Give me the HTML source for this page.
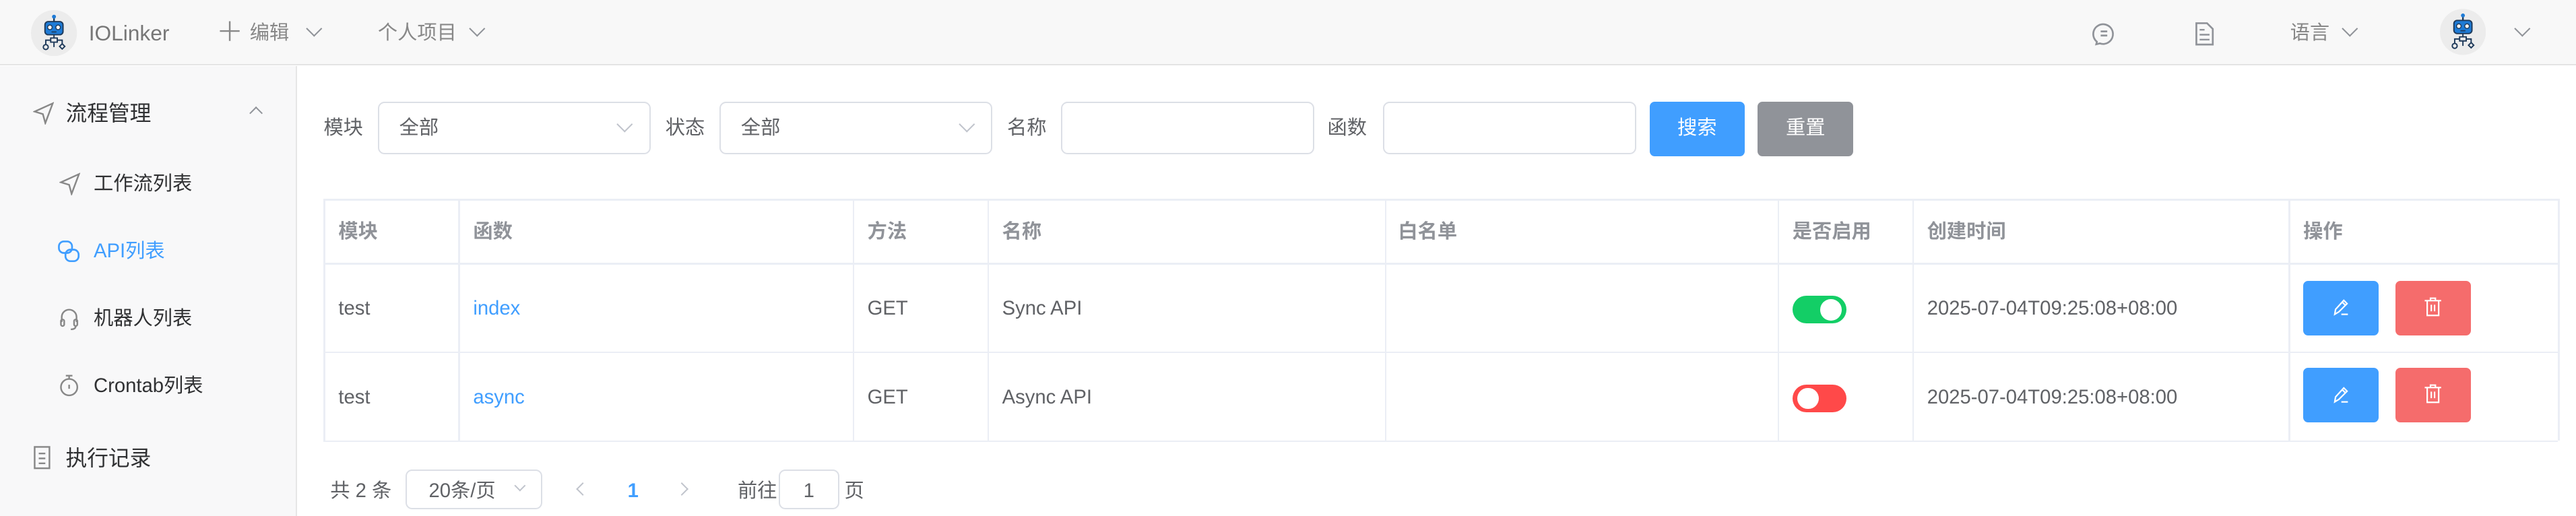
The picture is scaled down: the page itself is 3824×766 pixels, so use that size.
<!DOCTYPE html>
<html><head><meta charset="utf-8"><style>
html,body{margin:0;padding:0;}
body{width:3824px;height:766px;overflow:hidden;background:#fff;}
#r{zoom:2.43878;width:1568px;height:314px;position:relative;font-family:"Liberation Sans","Noto Sans CJK SC",sans-serif;font-size:12px;color:#606266;}
.a{position:absolute;}
.hdr{left:0;top:0;width:1568px;height:39px;background:#f8f8f8;border-bottom:1px solid #e4e4e4;}
.side{left:0;top:40px;width:180px;height:274px;background:#f8f8f9;border-right:1px solid #e6e6e6;}
.t{position:absolute;white-space:nowrap;line-height:14px;}
.sel{position:absolute;border:1px solid #dcdfe6;border-radius:4px;background:#fff;box-sizing:border-box;}
.chev{position:absolute;width:6px;height:6px;border-right:1px solid #c0c4cc;border-bottom:1px solid #c0c4cc;transform:rotate(45deg);}
.hchev{position:absolute;width:6px;height:6px;border-right:1px solid #909399;border-bottom:1px solid #909399;transform:rotate(45deg);}
.vl{position:absolute;top:121px;width:1px;height:147px;background:#ebeef5;}
.hl{position:absolute;left:197px;width:1360px;height:1px;background:#ebeef5;}
.th{color:#909399;font-weight:bold;}
.btn{position:absolute;border-radius:3px;}
</style></head><body><div id="r">
<div class="a hdr"></div>
<svg class="a" style="left:19px;top:6px" width="28" height="28" viewBox="0 0 28 28"><circle cx="14" cy="14" r="14" fill="#ececec"/><line x1="14" y1="4" x2="14" y2="7" stroke="#1f3a5a" stroke-width="1"/><circle cx="14" cy="4" r="1.2" fill="#1e7bd6"/><rect x="8.5" y="7" width="11" height="8" rx="2" fill="#1e7bd6" stroke="#1f3a5a" stroke-width=".8"/><circle cx="11.5" cy="10.5" r="1.4" fill="#fff" stroke="#1f3a5a" stroke-width=".6"/><circle cx="16.5" cy="10.5" r="1.4" fill="#fff" stroke="#1f3a5a" stroke-width=".6"/><line x1="12.5" y1="13.3" x2="15.5" y2="13.3" stroke="#1f3a5a" stroke-width=".7"/><path d="M14 15v2M12 17h4v2.5h-4zM12 18.3H9v3M16 18.3h3v2.5M14 19.5v3" fill="none" stroke="#1f3a5a" stroke-width=".8"/><circle cx="9" cy="22.5" r="1.5" fill="none" stroke="#1f3a5a" stroke-width=".8"/><path d="M19 20.5l1.6 1.6-1.6 1.6-1.6-1.6z" fill="none" stroke="#1f3a5a" stroke-width=".8"/></svg>
<div class="t" style="left:54px;top:13px;font-size:13px;color:#777">IOLinker</div>
<svg class="a" style="left:133px;top:12px" width="14" height="14" viewBox="0 0 14 14"><path d="M7 1v12M1 7h12" stroke="#888" stroke-width="1"/></svg>
<div class="t" style="left:152px;top:13px;font-size:12px;color:#888">编辑</div>
<div class="hchev" style="left:188px;top:14px"></div>
<div class="t" style="left:230px;top:13px;font-size:12px;color:#888">个人项目</div>
<div class="hchev" style="left:287px;top:14px"></div>
<svg class="a" style="left:1273px;top:13px" width="15" height="15" viewBox="0 0 15 15"><path d="M3.2 12.3A6 6 0 1 1 5 13.3L2.8 13.8z" fill="none" stroke="#909399" stroke-width="1.1"/><path d="M5.5 6h4M5.5 8.5h4" stroke="#909399" stroke-width="1.1"/></svg>
<svg class="a" style="left:1336px;top:13px" width="12" height="15" viewBox="0 0 12 15"><path d="M1 1h6.5L11 4.5V14H1z" fill="none" stroke="#909399" stroke-width="1.1"/><path d="M3 5h3M3 8h6M3 11h6" stroke="#909399" stroke-width="1"/></svg>
<div class="t" style="left:1394px;top:13px;color:#888">语言</div>
<div class="hchev" style="left:1427px;top:14px"></div>
<svg class="a" style="left:1485px;top:5px" width="28" height="29" viewBox="0 0 28 28"><circle cx="14" cy="14" r="14" fill="#ececec"/><line x1="14" y1="4" x2="14" y2="7" stroke="#1f3a5a" stroke-width="1"/><circle cx="14" cy="4" r="1.2" fill="#1e7bd6"/><rect x="8.5" y="7" width="11" height="8" rx="2" fill="#1e7bd6" stroke="#1f3a5a" stroke-width=".8"/><circle cx="11.5" cy="10.5" r="1.4" fill="#fff" stroke="#1f3a5a" stroke-width=".6"/><circle cx="16.5" cy="10.5" r="1.4" fill="#fff" stroke="#1f3a5a" stroke-width=".6"/><line x1="12.5" y1="13.3" x2="15.5" y2="13.3" stroke="#1f3a5a" stroke-width=".7"/><path d="M14 15v2M12 17h4v2.5h-4zM12 18.3H9v3M16 18.3h3v2.5M14 19.5v3" fill="none" stroke="#1f3a5a" stroke-width=".8"/><circle cx="9" cy="22.5" r="1.5" fill="none" stroke="#1f3a5a" stroke-width=".8"/><path d="M19 20.5l1.6 1.6-1.6 1.6-1.6-1.6z" fill="none" stroke="#1f3a5a" stroke-width=".8"/></svg>
<div class="hchev" style="left:1532px;top:14px"></div>

<div class="a side"></div>
<svg class="a" style="left:20px;top:62px" width="13" height="14" viewBox="0 0 13 14"><path d="M12 1L1 6l5 1.5L7.5 13z" fill="none" stroke="#888" stroke-width="1"/></svg>
<div class="t" style="left:40px;top:62px;font-size:13px;color:#303133">流程管理</div>
<div class="a" style="left:153px;top:66px;width:5px;height:5px;border-left:1px solid #909399;border-top:1px solid #909399;transform:rotate(45deg)"></div>
<svg class="a" style="left:36px;top:105px" width="13" height="14" viewBox="0 0 13 14"><path d="M12 1L1 6l5 1.5L7.5 13z" fill="none" stroke="#888" stroke-width="1"/></svg>
<div class="t" style="left:57px;top:105px;color:#303133">工作流列表</div>
<svg class="a" style="left:35px;top:146px" width="14" height="14" viewBox="0 0 14 14"><rect x="1" y="1" width="8" height="7" rx="3" fill="none" stroke="#409eff" stroke-width="1.1"/><rect x="5" y="6" width="8" height="7" rx="3" fill="none" stroke="#409eff" stroke-width="1.1"/></svg>
<div class="t" style="left:57px;top:146px;color:#409eff">API列表</div>
<svg class="a" style="left:36px;top:187px" width="12" height="14" viewBox="0 0 12 14"><path d="M1.5 9V6a4.5 4.5 0 0 1 9 0v3" fill="none" stroke="#888" stroke-width="1"/><rect x="1" y="7.5" width="2" height="4" rx="1" fill="none" stroke="#888"/><rect x="9" y="7.5" width="2" height="4" rx="1" fill="none" stroke="#888"/><path d="M10 11.5q0 2-3 2" fill="none" stroke="#888"/></svg>
<div class="t" style="left:57px;top:187px;color:#303133">机器人列表</div>
<svg class="a" style="left:36px;top:227px" width="12" height="15" viewBox="0 0 12 15"><circle cx="6" cy="8.5" r="5" fill="none" stroke="#888"/><path d="M4 1.5h4M6 1.5v2M6 7v2.5" stroke="#888"/></svg>
<div class="t" style="left:57px;top:228px;color:#303133">Crontab列表</div>
<svg class="a" style="left:20px;top:271px" width="11" height="15" viewBox="0 0 11 15"><rect x="1" y="1" width="9" height="13" fill="none" stroke="#888"/><path d="M3.5 5h4M3.5 8h4M3.5 11h4" stroke="#888"/></svg>
<div class="t" style="left:40px;top:272px;font-size:13px;color:#303133">执行记录</div>

<div class="t" style="left:197px;top:71px">模块</div>
<div class="sel" style="left:230px;top:62px;width:166px;height:32px"></div>
<div class="t" style="left:243px;top:71px">全部</div>
<div class="chev" style="left:377px;top:72px"></div>
<div class="t" style="left:405px;top:71px">状态</div>
<div class="sel" style="left:438px;top:62px;width:166px;height:32px"></div>
<div class="t" style="left:451px;top:71px">全部</div>
<div class="chev" style="left:585px;top:72px"></div>
<div class="t" style="left:613px;top:71px">名称</div>
<div class="sel" style="left:646px;top:62px;width:154px;height:32px"></div>
<div class="t" style="left:808px;top:71px">函数</div>
<div class="sel" style="left:842px;top:62px;width:154px;height:32px"></div>
<div class="btn" style="left:1004px;top:62px;width:58px;height:33px;background:#409eff"></div>
<div class="t" style="left:1021px;top:71px;color:#fff">搜索</div>
<div class="btn" style="left:1070px;top:62px;width:58px;height:33px;background:#909399"></div>
<div class="t" style="left:1087px;top:71px;color:#fff">重置</div>

<div class="hl" style="top:121px"></div><div class="hl" style="top:160px"></div><div class="hl" style="top:214px"></div><div class="hl" style="top:268px"></div>
<div class="vl" style="left:197px"></div><div class="vl" style="left:279px"></div><div class="vl" style="left:519px"></div><div class="vl" style="left:601px"></div><div class="vl" style="left:843px"></div><div class="vl" style="left:1082px"></div><div class="vl" style="left:1164px"></div><div class="vl" style="left:1393px"></div><div class="vl" style="left:1557px"></div>
<div class="t th" style="left:206px;top:134px">模块</div>
<div class="t th" style="left:288px;top:134px">函数</div>
<div class="t th" style="left:528px;top:134px">方法</div>
<div class="t th" style="left:610px;top:134px">名称</div>
<div class="t th" style="left:851px;top:134px">白名单</div>
<div class="t th" style="left:1091px;top:134px">是否启用</div>
<div class="t th" style="left:1173px;top:134px">创建时间</div>
<div class="t th" style="left:1402px;top:134px">操作</div>

<div class="t" style="left:206px;top:181px">test</div>
<div class="t" style="left:288px;top:181px;color:#409eff">index</div>
<div class="t" style="left:528px;top:181px">GET</div>
<div class="t" style="left:610px;top:181px">Sync API</div>
<div class="a" style="left:1091px;top:180px;width:33px;height:17px;border-radius:9px;background:#13ce66"></div>
<div class="a" style="left:1108px;top:182px;width:13px;height:13px;border-radius:50%;background:#fff"></div>
<div class="t" style="left:1173px;top:181px">2025-07-04T09:25:08+08:00</div>
<div class="btn" style="left:1402px;top:171px;width:46px;height:33px;background:#409eff"></div>
<svg class="a" style="left:1419px;top:181px" width="12" height="12" viewBox="0 0 12 12"><path d="M2 10.5l.5-3L7.5 2 9.5 4 4.5 9z M6.5 3l2 2 M6 10.5h4" fill="none" stroke="#fff" stroke-width=".9"/></svg>
<div class="btn" style="left:1458px;top:171px;width:46px;height:33px;background:#f56c6c"></div>
<svg class="a" style="left:1475px;top:180px" width="12" height="13" viewBox="0 0 12 13"><path d="M1 3h10M4.5 3V1.5h3V3M2.5 3v9h7V3M5 5.5v4M7 5.5v4" fill="none" stroke="#fff" stroke-width=".9"/></svg>

<div class="t" style="left:206px;top:235px">test</div>
<div class="t" style="left:288px;top:235px;color:#409eff">async</div>
<div class="t" style="left:528px;top:235px">GET</div>
<div class="t" style="left:610px;top:235px">Async API</div>
<div class="a" style="left:1091px;top:234px;width:33px;height:17px;border-radius:9px;background:#ff4949"></div>
<div class="a" style="left:1094px;top:236px;width:13px;height:13px;border-radius:50%;background:#fff"></div>
<div class="t" style="left:1173px;top:235px">2025-07-04T09:25:08+08:00</div>
<div class="btn" style="left:1402px;top:224px;width:46px;height:33px;background:#409eff"></div>
<svg class="a" style="left:1419px;top:234px" width="12" height="12" viewBox="0 0 12 12"><path d="M2 10.5l.5-3L7.5 2 9.5 4 4.5 9z M6.5 3l2 2 M6 10.5h4" fill="none" stroke="#fff" stroke-width=".9"/></svg>
<div class="btn" style="left:1458px;top:224px;width:46px;height:33px;background:#f56c6c"></div>
<svg class="a" style="left:1475px;top:233px" width="12" height="13" viewBox="0 0 12 13"><path d="M1 3h10M4.5 3V1.5h3V3M2.5 3v9h7V3M5 5.5v4M7 5.5v4" fill="none" stroke="#fff" stroke-width=".9"/></svg>

<div class="t" style="left:201px;top:292px">共 2 条</div>
<div class="sel" style="left:247px;top:286px;width:83px;height:24px"></div>
<div class="t" style="left:261px;top:292px">20条/页</div>
<div class="chev" style="left:314px;top:293px;width:4px;height:4px"></div>
<div class="a" style="left:352px;top:295px;width:5px;height:5px;border-left:1px solid #c0c4cc;border-bottom:1px solid #c0c4cc;transform:rotate(45deg)"></div>
<div class="t" style="left:382px;top:292px;color:#409eff;font-weight:bold">1</div>
<div class="a" style="left:412px;top:295px;width:5px;height:5px;border-right:1px solid #c0c4cc;border-top:1px solid #c0c4cc;transform:rotate(45deg)"></div>
<div class="t" style="left:449px;top:292px">前往</div>
<div class="sel" style="left:474px;top:286px;width:37px;height:24px"></div>
<div class="t" style="left:489px;top:292px">1</div>
<div class="t" style="left:514px;top:292px">页</div>
</div></body></html>
